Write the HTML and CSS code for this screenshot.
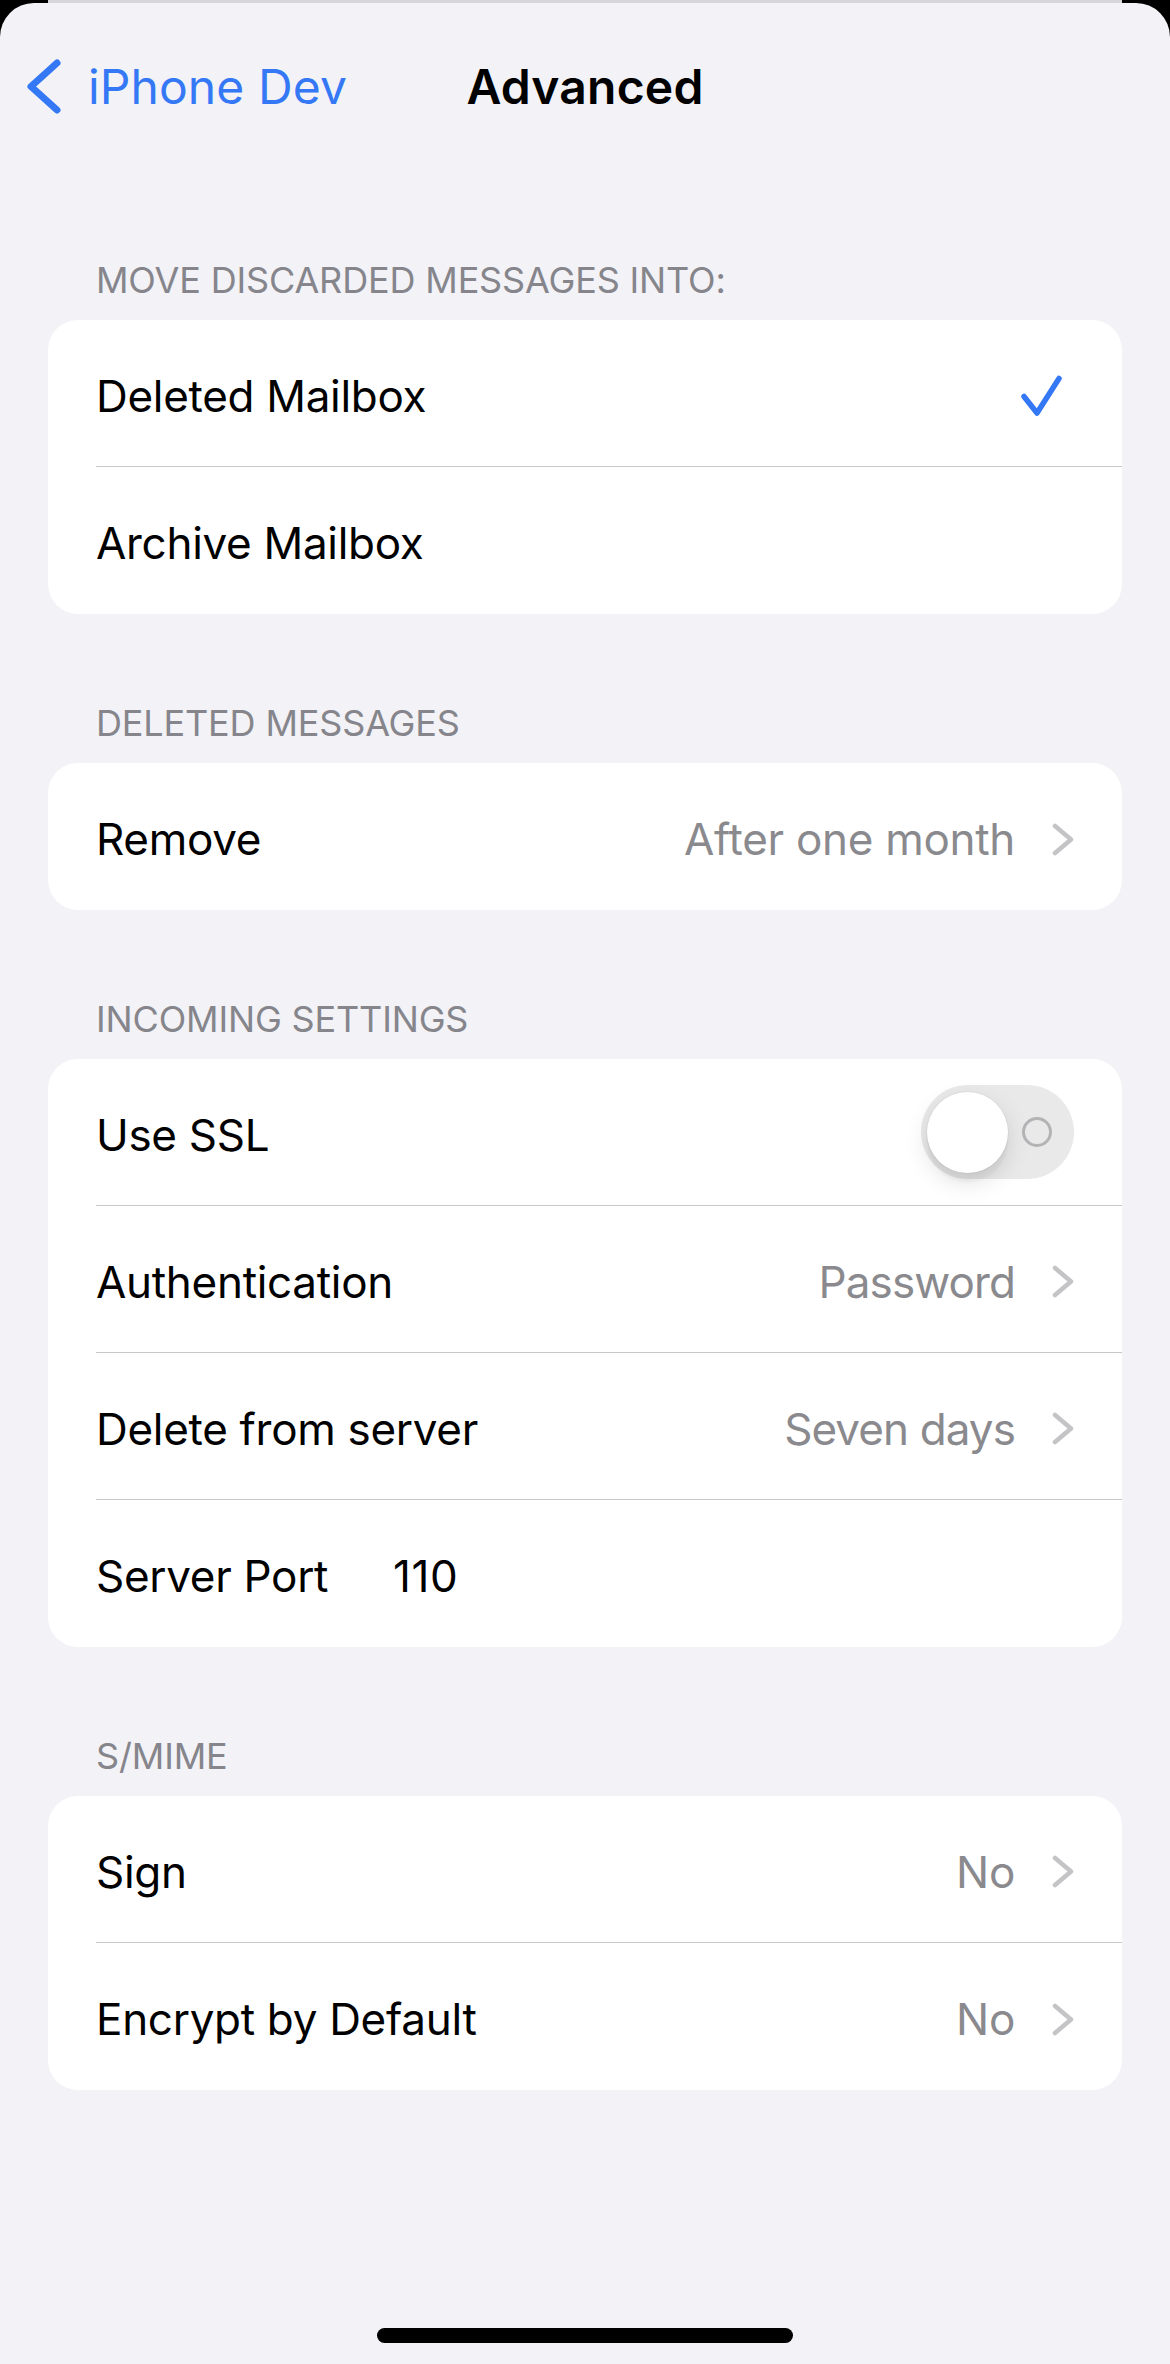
FILE: index.html
```html
<!DOCTYPE html>
<html lang="en">
<head>
<meta charset="utf-8">
<title>Advanced</title>
<link rel="stylesheet" href="styles.css">
</head>
<body>
<div class="backcard"></div>
<div class="sheet">
  <header class="navbar">
    <div class="nav-back">
      <svg class="nav-chevron" width="40" height="60" viewBox="0 0 40 60" aria-hidden="true">
        <polyline points="33,6 7,29.5 33,53" fill="none" stroke="#3478f6" stroke-width="7" stroke-linecap="round" stroke-linejoin="round"/>
      </svg>
      <span class="nav-back-label">iPhone Dev</span>
    </div>
    <h1 class="nav-title">Advanced</h1>
    <div class="nav-spacer"></div>
  </header>

  <section class="group">
    <h2 class="section-header">MOVE DISCARDED MESSAGES INTO:</h2>
    <div class="card">
      <div class="row">
        <div class="row-inner">
          <span class="row-label">Deleted Mailbox</span>
          <svg class="checkmark" width="56" height="50" viewBox="0 0 56 50" aria-hidden="true">
            <polyline points="6,27.5 19,44 41,9.5" fill="none" stroke="#3478f6" stroke-width="5.5" stroke-linecap="round" stroke-linejoin="round"/>
          </svg>
        </div>
      </div>
      <div class="row">
        <div class="row-inner">
          <span class="row-label">Archive Mailbox</span>
        </div>
      </div>
    </div>
  </section>

  <section class="group">
    <h2 class="section-header">DELETED MESSAGES</h2>
    <div class="card">
      <div class="row">
        <div class="row-inner">
          <span class="row-label">Remove</span>
          <span class="row-value">After one month</span>
          <svg class="disclosure" width="22" height="35" viewBox="0 0 22 35" aria-hidden="true">
            <polyline points="3,4 19,17.5 3,31" fill="none" stroke="#c4c4c7" stroke-width="4.5" stroke-linecap="round" stroke-linejoin="round"/>
          </svg>
        </div>
      </div>
    </div>
  </section>

  <section class="group">
    <h2 class="section-header">INCOMING SETTINGS</h2>
    <div class="card">
      <div class="row">
        <div class="row-inner">
          <span class="row-label">Use SSL</span>
          <span class="switch" role="switch" aria-checked="false">
            <span class="switch-knob"></span>
            <span class="switch-off-mark"></span>
          </span>
        </div>
      </div>
      <div class="row">
        <div class="row-inner">
          <span class="row-label">Authentication</span>
          <span class="row-value row-value-tight">Password</span>
          <svg class="disclosure" width="22" height="35" viewBox="0 0 22 35" aria-hidden="true">
            <polyline points="3,4 19,17.5 3,31" fill="none" stroke="#c4c4c7" stroke-width="4.5" stroke-linecap="round" stroke-linejoin="round"/>
          </svg>
        </div>
      </div>
      <div class="row">
        <div class="row-inner">
          <span class="row-label">Delete from server</span>
          <span class="row-value row-value-tight">Seven days</span>
          <svg class="disclosure" width="22" height="35" viewBox="0 0 22 35" aria-hidden="true">
            <polyline points="3,4 19,17.5 3,31" fill="none" stroke="#c4c4c7" stroke-width="4.5" stroke-linecap="round" stroke-linejoin="round"/>
          </svg>
        </div>
      </div>
      <div class="row">
        <div class="row-inner">
          <span class="row-label row-label-fixed">Server Port</span>
          <span class="row-field">110</span>
        </div>
      </div>
    </div>
  </section>

  <section class="group">
    <h2 class="section-header">S/MIME</h2>
    <div class="card">
      <div class="row">
        <div class="row-inner">
          <span class="row-label">Sign</span>
          <span class="row-value">No</span>
          <svg class="disclosure" width="22" height="35" viewBox="0 0 22 35" aria-hidden="true">
            <polyline points="3,4 19,17.5 3,31" fill="none" stroke="#c4c4c7" stroke-width="4.5" stroke-linecap="round" stroke-linejoin="round"/>
          </svg>
        </div>
      </div>
      <div class="row">
        <div class="row-inner">
          <span class="row-label">Encrypt by Default</span>
          <span class="row-value">No</span>
          <svg class="disclosure" width="22" height="35" viewBox="0 0 22 35" aria-hidden="true">
            <polyline points="3,4 19,17.5 3,31" fill="none" stroke="#c4c4c7" stroke-width="4.5" stroke-linecap="round" stroke-linejoin="round"/>
          </svg>
        </div>
      </div>
    </div>
  </section>

  <div class="home-indicator"></div>
</div>
</body>
</html>
```

FILE: styles.css
```css
* {
  box-sizing: border-box;
}

html, body {
  margin: 0;
  padding: 0;
}

body {
  background: #000;
  font-family: Inter, "Noto Sans", "Liberation Sans", sans-serif;
  -webkit-font-smoothing: antialiased;
  width: 1170px;
  height: 2364px;
  overflow: hidden;
}

.backcard {
  height: 3px;
  margin: 0 48px;
  background: #d6d6d8;
}

.sheet {
  position: relative;
  height: 2361px;
  background: #f2f2f7;
  border-radius: 34px 34px 0 0;
  overflow: hidden;
}

/* Navigation bar */
.navbar {
  height: 168px;
  display: grid;
  grid-template-columns: 1fr auto 1fr;
  align-items: center;
}

.nav-back {
  display: flex;
  align-items: center;
  padding-left: 24px;
}

.nav-chevron {
  display: block;
  flex: none;
}

.nav-back-label {
  margin-left: 24px;
  font-size: 48px;
  line-height: 58px;
  color: #3478f6;
  letter-spacing: 0.1px;
}

.nav-title {
  margin: 0;
  font-size: 48px;
  line-height: 58px;
  font-weight: 600;
  color: #000;
  letter-spacing: 0.2px;
}

/* Sections */
.group {
  display: block;
}

.section-header {
  margin: 87px 0 18px;
  padding-left: 96px;
  font-size: 36px;
  line-height: 44px;
  font-weight: 400;
  color: #85858b;
  letter-spacing: -0.15px;
}

.card {
  margin: 0 48px;
  background: #fff;
  border-radius: 30px;
  overflow: hidden;
}

.row {
  padding-left: 48px;
}

.row-inner {
  height: 147px;
  display: flex;
  align-items: center;
  padding: 5px 48px 0 0;
  border-bottom: 1px solid #c8c8cb;
}

.row:last-child .row-inner {
  border-bottom: none;
}

.row-label {
  flex: 1;
  font-size: 44px;
  line-height: 54px;
  color: #000;
  letter-spacing: -0.3px;
  white-space: nowrap;
}

.row-label-fixed {
  flex: none;
  width: 297px;
}

.row-field {
  flex: 1;
  font-size: 44px;
  line-height: 54px;
  color: #000;
  letter-spacing: 0.6px;
}

.row-value {
  font-size: 44px;
  line-height: 54px;
  color: #8a8a8e;
  letter-spacing: -0.3px;
  margin-right: 37px;
  white-space: nowrap;
}

.row-value-tight {
  letter-spacing: -0.9px;
}

.disclosure {
  display: block;
  flex: none;
}

.checkmark {
  display: block;
  flex: none;
  margin-top: -4px;
}

/* Switch */
.switch {
  position: relative;
  flex: none;
  width: 153px;
  height: 94px;
  margin-top: -5px;
  border-radius: 47px;
  background: #e9e9ea;
}

.switch-knob {
  position: absolute;
  left: 6px;
  top: 6.5px;
  width: 81px;
  height: 81px;
  border-radius: 50%;
  background: #fff;
  box-shadow: 0 9px 24px rgba(0, 0, 0, 0.12), 0 9px 3px rgba(0, 0, 0, 0.04), 0 0 0 1px rgba(0, 0, 0, 0.04);
}

.switch-off-mark {
  position: absolute;
  right: 22px;
  top: 32px;
  width: 30px;
  height: 30px;
  border-radius: 50%;
  border: 3px solid #b3b3b5;
}

/* Home indicator */
.home-indicator {
  position: absolute;
  left: 377px;
  bottom: 21px;
  width: 416px;
  height: 15px;
  border-radius: 8px;
  background: #000;
}
```
